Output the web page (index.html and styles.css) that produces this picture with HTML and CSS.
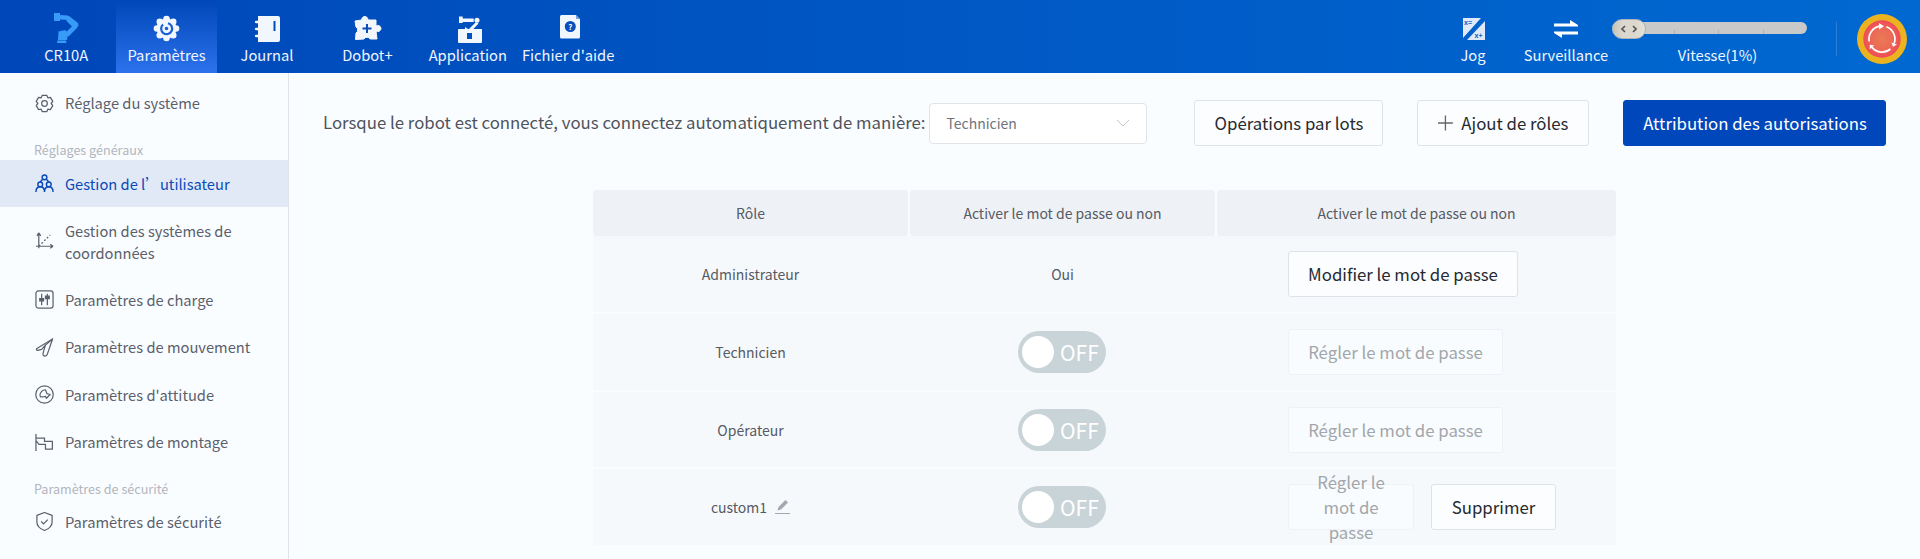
FILE: index.html
```html
<!DOCTYPE html>
<html lang="fr">
<head>
<meta charset="utf-8">
<title>Paramètres</title>
<link rel="stylesheet" href="styles.css">
</head>
<body>
<header class="topbar">
  <nav class="nav">
    <div class="nav-item">
      <svg class="nav-icon" viewBox="0 0 30 30"><g fill="#379bf7"><path d="M3 0h6v8H3z"/><path d="M9 2l8 .5 1 4.500-9-.5z"/><path d="M16 3.500l2-.5 9 7 .5 3-3 2-3-1-6-6z"/><path d="M22.500 12l4 2.500-9 9-4-3z"/><path d="M7.500 18.500l7-1.500 2.500 4-1 6H7z"/><path d="M6.500 27.500h8.500l.5 2.500H6z"/></g></svg>
      <span>CR10A</span>
    </div>
    <div class="nav-item nav-active">
      <svg class="nav-icon" viewBox="0 0 30 30"><g fill="#f2f6fd"><circle cx="14.500" cy="15.500" r="10"/><circle cx="14.500" cy="6" r="3.300"/><circle cx="14.500" cy="25" r="3.300"/><circle cx="5" cy="15.500" r="3.300"/><circle cx="24" cy="15.500" r="3.300"/><circle cx="7.800" cy="8.800" r="3.300"/><circle cx="21.200" cy="8.800" r="3.300"/><circle cx="7.800" cy="22.200" r="3.300"/><circle cx="21.200" cy="22.200" r="3.300"/></g><path d="M11 11.500a5.500 5.500 0 1 0 5-1.200" fill="none" stroke="#1a5fd4" stroke-width="2.200"/><circle cx="14.500" cy="15.500" r="1.800" fill="#1a5fd4"/></svg>
      <span>Paramètres</span>
    </div>
    <div class="nav-item">
      <svg class="nav-icon" viewBox="0 0 30 30"><path fill="#f2f6fd" fill-rule="evenodd" d="M6 3h20a2 2 0 0 1 2 2v22a2 2 0 0 1-2 2H6zM21.500 8v10h2V8z"/><path stroke="#f2f6fd" stroke-width="2.300" stroke-linecap="round" d="M4 9h3M4 16h3M4 23h3"/></svg>
      <span>Journal</span>
    </div>
    <div class="nav-item">
      <svg class="nav-icon" viewBox="0 0 30 30"><path fill="#f2f6fd" stroke="#f2f6fd" stroke-linejoin="round" fill-rule="evenodd" d="M9.500 7a4 4 0 0 1 2.500-3.500c2-.5 4 1 4 3.500h8v6a3.200 3.200 0 0 1 5 2.500 3.200 3.200 0 0 1-5 2.500l1 8h-7a3.400 3.400 0 0 0-6 0l-8.500.5.500-6.500a3.500 3.500 0 0 0 0-6L3 8z"/><path stroke="#0a4dbc" stroke-width="2" d="M15 11v9M10.500 15.500h9"/></svg>
      <span>Dobot+</span>
    </div>
    <div class="nav-item">
      <svg class="nav-icon" viewBox="0 0 30 30"><g fill="#f2f6fd"><path d="M6 3.500h3.700V10H6zM9.700 5.500h11V9h-11z"/><circle cx="24" cy="7.300" r="2.500"/><path d="M23 9l2.500 1.500-7 7.500-2.500-2z"/><path fill-rule="evenodd" d="M6 16h6v-2l3 2h14v13a1 1 0 0 1-1 1H6a1 1 0 0 1-1-1V17a1 1 0 0 1 1-1zM14 20v6h5v-6z"/></g></svg>
      <span>Application</span>
    </div>
    <div class="nav-item">
      <svg class="nav-icon" viewBox="0 0 30 30"><path fill="#f2f6fd" d="M8.500 2H23l4 4v18a1.500 1.500 0 0 1-1.500 1.500h-17A1.500 1.500 0 0 1 7 24V3.500A1.500 1.500 0 0 1 8.500 2z"/><path fill="#0a4dbc" d="M23 2v4h4z" opacity=".5"/><circle cx="17.300" cy="13.500" r="5.500" fill="#0a4dbc"/><text x="17.300" y="16.500" class="help-mark">?</text></svg>
      <span>Fichier d'aide</span>
    </div>
  </nav>
  <div class="tools">
    <div class="tool tool-jog">
      <svg class="tool-icon" viewBox="0 0 24 24"><path fill="#dfe9f8" d="M2 0h18L2 20zM24 3v19H6z"/><text x="3" y="7" class="jog-mark">x=</text><text x="13.500" y="20" class="jog-mark">x+</text></svg>
      <span>Jog</span>
    </div>
    <div class="tool tool-watch">
      <svg class="tool-icon" viewBox="0 0 24 24"><path fill="#fff" d="M0 5.500h16V2l8 5v1.500H0zM24 13.500v3H8V20l-8-5v-1.500z"/></svg>
      <span>Surveillance</span>
    </div>
    <div class="speed">
      <div class="slider">
        <i class="tick tick-a"></i><i class="tick tick-b"></i><i class="tick tick-c"></i>
        <div class="thumb"><svg viewBox="0 0 16 8" class="thumb-icon"><path fill="none" stroke="#555" stroke-width="1.600" d="M4 1L1 4l3 3M12 1l3 3-3 3"/></svg></div>
      </div>
      <span class="speed-label">Vitesse(1%)</span>
    </div>
    <div class="divider"></div>
    <div class="estop">
      <svg viewBox="0 0 50 50">
        <defs><radialGradient id="estop-core"><stop offset="0" stop-color="#ea7a55"/><stop offset=".6" stop-color="#ec6856"/><stop offset="1" stop-color="#ef4a58"/></radialGradient></defs>
        <circle cx="25" cy="25" r="25" fill="#ebb31f"/><circle cx="25" cy="25" r="18.700" fill="url(#estop-core)"/>
        <g fill="none" stroke="#fff" stroke-width="1.700"><path d="M12.200 27.300A13 13 0 0 1 22.700 12.200"/><path d="M29.400 12.800A13 13 0 0 1 37.200 29.400"/><path d="M33.400 35A13 13 0 0 1 15 33.400"/></g>
        <path fill="#fff" d="M22 9l5 3.300-5 3.200zM36 32.700l4-2.300-5.600-2zM12.800 30.700l4.500.8-4.600 3.800z"/>
      </svg>
    </div>
  </div>
</header>
<div class="body-wrap">
  <aside class="sidebar">
    <div class="menu-item menu-first">
      <svg class="menu-icon" viewBox="0 0 20 20"><path d="M7.500 1.500h5l1 2.500 2.700-.5 2.500 4.300-1.700 2.200 1.700 2.200-2.500 4.300-2.700-.5-1 2.500h-5l-1-2.500-2.700.5-2.500-4.300L3 10 1.300 7.800l2.500-4.300 2.700.5z" stroke-linejoin="round"/><circle cx="10" cy="10" r="3"/></svg>
      <span>Réglage du système</span>
    </div>
    <div class="menu-label">Réglages généraux</div>
    <div class="menu-item menu-active">
      <svg class="menu-icon" viewBox="0 0 20 20"><circle cx="10" cy="3.500" r="2.500"/><circle cx="5.500" cy="11" r="2.500"/><circle cx="14.500" cy="11" r="2.500"/><path d="M1 19c0-3.500 1.500-5.500 4.500-5.500S10 15.500 10 19c0-3.500 1.500-5.500 4.500-5.500S19 15.500 19 19M5.500 8.500L8 5.500M14.500 8.500L12 5.500"/></svg>
      <span>Gestion de l’utilisateur</span>
    </div>
    <div class="menu-item menu-tall">
      <svg class="menu-icon" viewBox="0 0 20 20"><path d="M4 1v16M1 15h18M4 1L2 4M4 1l2 3M19 15l-3-2M19 15l-3 2"/><path stroke-dasharray="2 2" d="M4 15L16 3"/></svg>
      <span>Gestion des systèmes de coordonnées</span>
    </div>
    <div class="menu-item">
      <svg class="menu-icon" viewBox="0 0 20 20"><rect x="1" y="1" width="18" height="18" rx="2.500"/><path d="M7 4v12M13 4v12"/><path class="menu-fill" d="M5 9h4v2.500H5zM11 6.500h4V9h-4z"/></svg>
      <span>Paramètres de charge</span>
    </div>
    <div class="menu-item">
      <svg class="menu-icon" viewBox="0 0 20 20"><path d="M18.500 1L2 11q-1.500 1.500 1 2l4-1 4-4.500-2.500 8.500q-.5 3 2 3 2 0 2.500-2z" stroke-linejoin="round"/><path d="M11 7.500L18.500 1"/></svg>
      <span>Paramètres de mouvement</span>
    </div>
    <div class="menu-item">
      <svg class="menu-icon" viewBox="0 0 20 20"><circle cx="10" cy="10" r="9.200"/><path d="M5.500 12C4 8.500 8 5 11 5l1.500 4 3.500 1-4 4-1-2c-2 0-4.500 1.500-5.500 0z" stroke-linejoin="round"/></svg>
      <span>Paramètres d'attitude</span>
    </div>
    <div class="menu-item">
      <svg class="menu-icon" viewBox="0 0 20 20"><path d="M1 1v18M1 5.300h9v3.400h8.300V17H11v-5H4.300L1 8"/></svg>
      <span>Paramètres de montage</span>
    </div>
    <div class="menu-label menu-label-second">Paramètres de sécurité</div>
    <div class="menu-item">
      <svg class="menu-icon menu-icon-shield" viewBox="0 0 20 21"><path d="M10 1l8 3v7c0 4-3 7-8 9-5-2-8-5-8-9V4z" stroke-linejoin="round"/><path d="M6.500 10.500l2.500 2.500 4.500-4.500"/></svg>
      <span>Paramètres de sécurité</span>
    </div>
  </aside>
  <main class="main">
    <div class="toolbar">
      <span class="auto-label">Lorsque le robot est connecté, vous connectez automatiquement de manière:</span>
      <div class="select">
        <span>Technicien</span>
        <svg class="chevron" viewBox="0 0 14 8"><path d="M1 1l6 6 6-6" fill="none" stroke="#c4c8cf" stroke-width="1"/></svg>
      </div>
      <button class="btn btn-batch">Opérations par lots</button>
      <button class="btn btn-add"><svg class="plus" viewBox="0 0 18 18"><path d="M9 0v18M0 9h18" stroke="#666" stroke-width="1.600"/></svg>Ajout de rôles</button>
      <button class="btn btn-primary">Attribution des autorisations</button>
    </div>
    <div class="table">
      <div class="table-head">
        <div class="cell head">Rôle</div>
        <div class="cell head">Activer le mot de passe ou non</div>
        <div class="cell head">Activer le mot de passe ou non</div>
      </div>
      <div class="table-body">
        <div class="body-row row-wide">
          <div class="cell">Administrateur</div>
          <div class="cell">Oui</div>
          <div class="cell actions"><button class="btn btn-modify">Modifier le mot de passe</button></div>
        </div>
        <div class="body-row row-wide">
          <div class="cell">Technicien</div>
          <div class="cell"><div class="switch"><i class="knob"></i><span>OFF</span></div></div>
          <div class="cell actions"><button class="btn btn-disabled">Régler le mot de passe</button></div>
        </div>
        <div class="body-row">
          <div class="cell">Opérateur</div>
          <div class="cell"><div class="switch"><i class="knob"></i><span>OFF</span></div></div>
          <div class="cell actions"><button class="btn btn-disabled">Régler le mot de passe</button></div>
        </div>
        <div class="body-row row-wide">
          <div class="cell">custom1<svg class="pencil" viewBox="0 0 15 14"><path fill="#a4a7b0" d="M10.500 0l2.500 2.500L6 9.500 2.500 10.500 3.500 7z"/><path stroke="#a4a7b0" d="M0 13.500h15"/></svg></div>
          <div class="cell"><div class="switch"><i class="knob"></i><span>OFF</span></div></div>
          <div class="cell actions gap"><button class="btn btn-disabled btn-wrap">Régler le mot de passe</button><button class="btn btn-delete">Supprimer</button></div>
        </div>
      </div>
    </div>
  </main>
</div>
</body>
</html>
```
FILE: styles.css
```css
* { box-sizing: border-box; }
html, body { margin: 0; padding: 0; height: 559px; overflow: hidden; }
body {
  font-family: "Noto Sans CJK SC", "Noto Sans", sans-serif;
  background: #fafdff;
  color: #555a66;
  display: flex;
  flex-direction: column;
}
.topbar {
  height: 73px;
  flex: none;
  display: flex;
  justify-content: space-between;
  background: linear-gradient(90deg, #0047b9 0%, #0069d1 100%);
  color: #f0f5ff;
  font-size: 14.700px;
}
.nav { display: flex; padding-left: 16px; }
.nav-item {
  width: 100.400px;
  height: 73px;
  display: flex;
  flex-direction: column;
  align-items: center;
  padding-top: 13px;
}
.nav-item span { line-height: 20px; margin-top: auto; margin-bottom: 8px; white-space: nowrap; }
.nav-active { background: linear-gradient(180deg, #0047b9 0%, #2b72ec 100%); }
.nav-icon { width: 30px; height: 30px; display: block; flex: none; }
.help-mark { font-size: 8px; font-weight: 700; fill: #fff; text-anchor: middle; }
.jog-mark { font-size: 7px; font-weight: 700; fill: #0d63c8; }
.tools { display: flex; padding-right: 13px; }
.tool {
  height: 73px;
  display: flex;
  flex-direction: column;
  align-items: center;
  padding-top: 18px;
}
.tool span { margin-top: auto; margin-bottom: 8px; line-height: 20px; white-space: nowrap; }
.tool-jog { width: 60px; margin-right: 18px; }
.tool-watch { width: 90px; margin-right: 1px; }
.tool-icon { width: 24px; height: 24px; display: block; flex: none; }
.speed { width: 195px; height: 73px; display: flex; flex-direction: column; padding-top: 22px; }
.speed-label { margin-top: auto; margin-bottom: 8px; line-height: 20px; text-align: center; padding-left: 16px; }
.slider { position: relative; height: 12px; background: #c9c9c9; border-radius: 6px; }
.tick { position: absolute; bottom: 0; width: 1px; height: 4px; background: #b0b0b0; }
.tick-a { left: 62px; }
.tick-b { left: 106px; }
.tick-c { left: 151px; }
.thumb {
  position: absolute;
  left: 0;
  top: -3px;
  width: 34px;
  height: 20px;
  border-radius: 10px;
  background: linear-gradient(90deg, #c8c4ba 0%, #dcd8cd 30%, #dcd8cd 70%, #e6e2d8 100%);
  border: 1px solid #a9b4bf;
  display: flex;
  align-items: center;
  justify-content: center;
}
.thumb-icon { width: 16px; height: 8px; }
.divider { width: 1px; height: 34px; margin: 22px 20px 0 29px; background: #2f7dd6; }
.estop { width: 50px; height: 50px; margin-top: 14px; }
.estop svg { width: 50px; height: 50px; display: block; }

.body-wrap { flex: 1; display: flex; min-height: 0; }
.sidebar {
  width: 289px;
  flex: none;
  border-right: 1px solid #dfe2e8;
  padding-top: 6px;
  font-size: 14.700px;
}
.menu-item {
  display: flex;
  align-items: center;
  height: 47.500px;
  padding-left: 35px;
  color: #5b606c;
  line-height: 22px;
}
.menu-item span { margin-left: 11px; width: 200px; }
.menu-first { height: 48px; }
.menu-tall { height: 69px; }
.menu-icon {
  width: 19px;
  height: 19px;
  flex: none;
  fill: none;
  stroke: #5b606c;
  stroke-width: 1.300;
}
.menu-icon-shield { height: 21px; }
.menu-fill { fill: #5b606c; }
.menu-active { height: 47px; background: #e1e9f6; color: #0a49b8; }
.menu-active .menu-icon { stroke: #0a49b8; stroke-width: 1.500; }
.menu-label {
  height: 33px;
  padding: 13px 0 0 34px;
  font-size: 12.600px;
  line-height: 20px;
  color: #b1b5bc;
}
.menu-label-second { height: 32px; }

.main { flex: 1; min-width: 0; }
.toolbar {
  height: 46px;
  margin-top: 27px;
  padding: 0 34px;
  display: flex;
  align-items: center;
}
.auto-label { font-size: 16.800px; line-height: 24px; margin-top: -2px; color: #4f535c; white-space: nowrap; }
.select {
  width: 218px;
  height: 41px;
  margin-left: 4px;
  padding: 0 16px;
  display: flex;
  align-items: center;
  justify-content: space-between;
  background: #fff;
  border: 1px solid #e0e3e8;
  border-radius: 4px;
  font-size: 14px;
  color: #6f737b;
  flex: none;
}
.chevron { width: 14px; height: 8px; }
.btn {
  height: 46px;
  padding: 0 20px;
  background: #fbfdff;
  border: 1px solid #dfe2e8;
  border-radius: 3px;
  font: inherit;
  font-size: 16.800px;
  color: #26292f;
  white-space: nowrap;
  display: inline-flex;
  align-items: center;
  justify-content: center;
  flex: none;
}
.btn-batch { margin-left: 47px; width: 189px; }
.btn-add { margin-left: 34px; width: 172px; }
.plus { width: 18px; height: 18px; margin-right: 8px; }
.btn-primary { margin-left: 34px; width: 263px; background: #0047bb; border-color: #0047bb; color: #fff; }
.btn-modify { width: 230px; padding: 0; }
.table {
  width: 1023px;
  margin: 44px auto 0;
  font-size: 14px;
}
.table-head, .body-row {
  display: grid;
  grid-template-columns: 315px 305px 399px;
  column-gap: 2px;
}
.table-head { height: 46px; }
.table-body { display: flex; flex-direction: column; row-gap: 2px; }
.body-row { height: 75px; background: #f6f9fc; column-gap: 2px; }
.row-wide { height: 76px; }
.cell { display: flex; align-items: center; justify-content: center; color: #555a63; }
.head { background: #eef1f6; border-radius: 3px; }
.actions { justify-content: flex-start; padding-left: 71px; }
.gap { gap: 17px; }
.btn-disabled { color: #a2a6ab; border-color: #eef1f5; background: #f9fcfe; width: 215px; }
.btn-wrap { width: 126px; white-space: normal; text-align: center; line-height: 25px; }
.btn-delete { width: 125px; }
.pencil { width: 15px; height: 14px; margin-left: 8px; }
.switch {
  width: 88px;
  height: 42px;
  margin-right: 1px;
  border-radius: 21px;
  background: #c9d4d8;
  display: flex;
  align-items: center;
  padding-left: 4px;
  color: #fff;
  font-size: 21px;
}
.knob { width: 32px; height: 32px; border-radius: 50%; background: #fff; display: block; }
.switch span { margin-left: 6px; }
```
